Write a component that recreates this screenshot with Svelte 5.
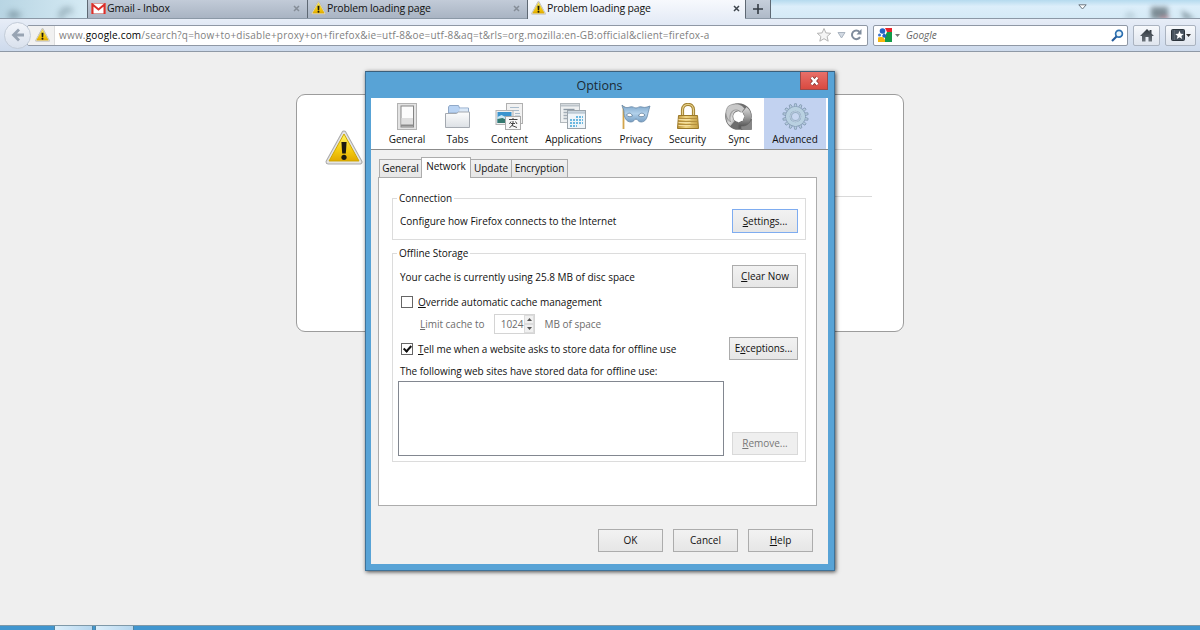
<script lang="ts">
  type Pane = { id: string; label: string };

  const panes: Pane[] = [
    { id: 'general', label: 'General' },
    { id: 'tabs', label: 'Tabs' },
    { id: 'content', label: 'Content' },
    { id: 'applications', label: 'Applications' },
    { id: 'privacy', label: 'Privacy' },
    { id: 'security', label: 'Security' },
    { id: 'sync', label: 'Sync' },
    { id: 'advanced', label: 'Advanced' }
  ];

  const browserTabs = [
    { title: 'Gmail - Inbox', icon: 'gmail' },
    { title: 'Problem loading page', icon: 'warning' },
    { title: 'Problem loading page', icon: 'warning' }
  ];

  const subTabs = ['General', 'Network', 'Update', 'Encryption'];
  const gearTeeth = Array.from({ length: 14 }, (_, i) => (i * 360) / 14);

  let activeBrowserTab = $state(2);
  let activePane = $state('advanced');
  let activeSubTab = $state('Network');
  let overrideCache = $state(false);
  let tellMe = $state(true);
</script>

{#snippet warning(size: number)}
  <svg width={size} height={size * 0.92} viewBox="0 0 38 35">
    <path d="M19 3 L35 32 H3 Z" fill="#a9a9a9" stroke="#a9a9a9" stroke-width="5" stroke-linejoin="round" />
    <path d="M19 3 L35 32 H3 Z" fill="#e9e9e9" stroke="#e4e4e4" stroke-width="3" stroke-linejoin="round" />
    <path d="M19 4 L34 31 H4 Z" fill="url(#warn)" stroke="#cfa800" stroke-width="1" stroke-linejoin="round" />
    <path d="M16.4 12 h5.2 l-.8 11.5 h-3.6z" fill="#1c1a10" />
    <circle cx="19" cy="27.4" r="2.6" fill="#1c1a10" />
  </svg>
{/snippet}

{#snippet paneIcon(id: string)}
  <svg class="pane-icon" width="30" height="28" viewBox="0 0 30 28">
    {#if id === 'general'}
      <rect x="5.500" y=".5" width="19" height="26" fill="#e3e3e3" stroke="#b3b3b3" />
      <rect x="9" y="3" width="12.500" height="21" fill="#fcfcfc" stroke="#858585" />
      <rect x="9.500" y="15" width="11.500" height="7" fill="#dedede" />
      <path d="M9 22.500h12.500" stroke="#8a8a8a" stroke-width="2" />
    {:else if id === 'tabs'}
      <path d="M5.500 10V4l1-1.500h9l1 2.500h9V10z" fill="#b9d3f3" stroke="#91a9c8" />
      <path d="M17 5.500h8v3.500h-9z" fill="#dbe8f6" />
      <path d="M2.500 10.500h11l2-1.500h11v15.500h-24z" fill="url(#folder)" stroke="#a4a9b0" />
    {:else if id === 'content'}
      <rect x="11.500" y=".5" width="16" height="20" fill="#f1f1f1" stroke="#b0b0b0" />
      <path d="M15 4.500h9M17 7.500h7M20 10.500h5M20 13h5" stroke="#a9bccc" />
      <rect x="1" y="7.500" width="17" height="14" fill="#f0f0f0" stroke="#b4b4b4" />
      <rect x="2.500" y="9" width="14" height="11" fill="#3a94ce" />
      <path d="M2.500 14l4-2 4 2 6-1v3h-14z" fill="#cce9f6" />
      <path d="M2.500 16l5-1 4 2h5v3h-14z" fill="#34796f" />
      <rect x="10.500" y="13.500" width="15" height="13" fill="#f7f7f7" stroke="#aaa" />
      <path d="M14 16.500h8.500M18 15v2M16 18.500l-1.500 2.500M20.500 18.500l1.500 2.500M18 18c.5 3-1 5.500-3.500 6.500M18.500 20l-1.500 2.500 5 2M16 20.500h4" fill="none" stroke="#444" stroke-width="1" />
    {:else if id === 'applications'}
      <rect x="1.500" y=".5" width="19" height="19" fill="#eef0f1" stroke="#b3b9bd" />
      <path d="M2 2.500h18" stroke="#bcc4ca" stroke-width="2" />
      <path d="M4.500 6.500h11" stroke="#8b97a3" stroke-width="1.400" />
      <path d="M4.500 9.500h4M4.500 12.500h4M4.500 15.500h4" stroke="#a3adb6" stroke-width="1.400" />
      <rect x="8.500" y="7.500" width="18" height="18" fill="#eff5f9" stroke="#9ba4ab" />
      <path d="M9 9.500h17" stroke="#bccad5" stroke-width="2.500" />
      <path d="M17 14h7M11 17h13M11 20h13M11 23h7" stroke="#6bb8e0" stroke-width="2" stroke-dasharray="2 1" />
    {:else if id === 'privacy'}
      <path d="M2.500 3v23" stroke="#d3a54c" stroke-width="1.800" />
      <path d="M1 2c3 3 5 3 8 2 3-1 4 1 6 1s3-2 6-1 5 0 8-1c-1 3-1 4-2 7-1 6-3 9-7 9-3 0-3.500-3-5-3s-2 3-5 3C5 19 3 14 3 9 3 6 1 4 1 2z" fill="url(#mask)" stroke="#6788a7" stroke-width=".8" />
      <path d="M5.500 12c2-3 5-2 6 1-2 1-5 1-6-1zM17.500 13c1-3 4-4 6.500-1-1 2-4.500 2-6.500 1z" fill="#fff" stroke="#54728f" stroke-width=".7" />
    {:else if id === 'security'}
      <path d="M9.500 13V7c0-7.500 11-7.500 11 0v6" fill="none" stroke="#a18131" stroke-width="3.200" />
      <path d="M9.500 13V7c0-7.500 11-7.500 11 0v6" fill="none" stroke="#e8d28c" stroke-width="1.200" />
      <path d="M5.500 12.500h19l1 13h-21z" fill="url(#lock)" stroke="#9a7829" />
      <path d="M5.500 15.500h19M5.500 18.500h19M5.500 21.500h19" stroke="#b38f3e" />
      <path d="M5.500 16.500h12M5.500 19.500h12M5.500 22.500h12" stroke="#f4dfa0" />
    {:else if id === 'sync'}
      <circle cx="14.500" cy="13.500" r="9.300" fill="none" stroke="#6d6d6d" stroke-width="8" />
      <path d="M14.500 4.200a9.300 9.300 0 0 0-6 16.300" fill="none" stroke="url(#steel)" stroke-width="6.600" />
      <path d="M14.500 22.800a9.300 9.300 0 0 0 6-16.300" fill="none" stroke="url(#steel2)" stroke-width="6.600" />
      <path d="M4.500 3c6-3.500 13-2.500 16 2.500l-3 4.500c-2-3-6-4-9-2-3 3-3 7-2 11C.5 14 1 7 4.500 3z" fill="#c9c9c9" stroke="#808080" stroke-width=".6" />
      <path d="M17 26.500h10.500V16c-2 5-5.500 7.500-10.500 7z" fill="#858585" stroke="#606060" stroke-width=".6" />
      <path d="M14 8.500l2 1.200 2.500-.4.500 2.200 1.500 1.800-1.300 2-.3 2.400-2.400.2-2 1.600-1.700-1.800-2.500-.6.300-2.500-1-2.300 2.100-1.300z" fill="#fff" />
    {:else}
      <g transform="translate(15.500 13.500)">
        {#each gearTeeth as angle}
          <path d="M-1.500-9-.9-12.800h1.800L1.500-9z" transform="rotate({angle})" fill="#b5ccde" stroke="#8299b2" stroke-width=".8" />
        {/each}
        <circle r="7.700" fill="none" stroke="#829ab3" stroke-width="5" />
        <circle r="7.700" fill="none" stroke="#b9d1e1" stroke-width="3.900" />
        <circle r="4.400" fill="#c8d7f0" stroke="#8ea7bf" stroke-width="1.800" />
        <circle r="4.800" fill="none" stroke="#d5e3ee" stroke-width=".7" />
      </g>
    {/if}
  </svg>
{/snippet}

<svg class="defs" width="0" height="0">
  <defs>
    <linearGradient id="warn" x2="0" y2="1"><stop stop-color="#fff36a" /><stop offset=".6" stop-color="#f5cc10" /><stop offset="1" stop-color="#e2a900" /></linearGradient>
    <linearGradient id="folder" x2="0" y2="1"><stop stop-color="#fdfdfd" /><stop offset="1" stop-color="#dce0e5" /></linearGradient>
    <linearGradient id="mask" x2="0" y2="1"><stop stop-color="#7ea7cb" /><stop offset=".5" stop-color="#b1d0ea" /><stop offset="1" stop-color="#779fc4" /></linearGradient>
    <linearGradient id="lock"><stop stop-color="#bd9337" /><stop offset=".4" stop-color="#f0d684" /><stop offset="1" stop-color="#c59f43" /></linearGradient>
    <linearGradient id="steel" x2="1" y2="1"><stop stop-color="#777" /><stop offset=".45" stop-color="#ddd" /><stop offset="1" stop-color="#888" /></linearGradient>
    <linearGradient id="steel2" x2="0" y2="1"><stop stop-color="#ccc" /><stop offset=".5" stop-color="#999" /><stop offset="1" stop-color="#5b5b5b" /></linearGradient>
    <linearGradient id="home" x2="0" y2="1"><stop stop-color="#2f363d" /><stop offset="1" stop-color="#6c747c" /></linearGradient>
  </defs>
</svg>

<div class="browser">
  <div class="tab-strip">
    <div class="glass left">
      <svg width="87" height="19">
        <g fill="none" stroke="#58727e" stroke-width="4">
          <path d="M21 15H10m5-4-5 4 5 4" />
          <path d="M72 12a6 6 0 1 0 0 7" />
        </g>
      </svg>
    </div>
    {#each browserTabs as tab, i}
      <button class="browser-tab" class:active={activeBrowserTab === i} onclick={() => (activeBrowserTab = i)}>
        {#if tab.icon === 'gmail'}
          <svg width="15" height="11" viewBox="0 0 15 11">
            <rect x=".5" y=".5" width="14" height="10" fill="#fff" stroke="#d99b98" />
            <path d="M1.500 11V1.500l6 5 6-5V11" fill="none" stroke="#da2f2b" stroke-width="2" />
          </svg>
        {:else}
          {@render warning(15)}
        {/if}
        <span class="tab-title">{tab.title}</span>
        <svg class="close" width="7" height="7" viewBox="0 0 7 7"><path d="M1 1l5 5M6 1L1 6" stroke="currentColor" stroke-width="1.500" /></svg>
      </button>
    {/each}
    <button class="new-tab" aria-label="New tab">
      <svg width="10" height="10"><path d="M5 0v10M0 5h10" stroke="#333b44" stroke-width="1.600" /></svg>
    </button>
    <div class="glass right">
      <svg class="list-all" width="9" height="6"><path d="M.8.800h7.400L4.500 5z" fill="#fff" stroke="#6b7780" /></svg>
      <svg class="ghosts" width="75" height="19">
        <path d="M0 14l5-3 5 3v5H0z" fill="#b6ccd7" />
        <rect x="26" y="7" width="17" height="12" fill="#5f6d75" />
        <path d="M35 17h9v2h-9z" fill="#c03040" />
        <path d="M56 10l7 4 7 5H59z" fill="#6c7f8a" />
      </svg>
    </div>
  </div>

  <div class="toolbar">
    <button class="back" aria-label="Back">
      <svg width="14" height="14" viewBox="0 0 14 14"><path d="M13 7H3M8 1.500L2.500 7 8 12.500" fill="none" stroke="#98a4b3" stroke-width="2.800" /></svg>
    </button>
    <div class="url-bar">
      <span class="identity">{@render warning(15)}</span>
      <span class="url">www.<b>google.com</b>/search?q=how+to+disable+proxy+on+firefox&amp;ie=utf-8&amp;oe=utf-8&amp;aq=t&amp;rls=org.mozilla:en-GB:official&amp;client=firefox-a</span>
      <svg class="url-icons" width="46" height="16">
        <path d="M7 1.500l1.900 4.400 4.800.4-3.600 3.200 1.100 4.700L7 11.700l-4.200 2.500 1.100-4.700L.3 6.300l4.800-.4z" fill="#f5f5f5" stroke="#b4b4b4" />
        <path d="M21 5.500h7L24.500 11z" fill="#d3dae3" stroke="#aab4c0" />
        <path d="M42.500 5A4.300 4.300 0 1 0 43 10" fill="none" stroke="#7f8c9c" stroke-width="2" />
        <path d="M39.500 7.500h5v-5.500z" fill="#7f8c9c" />
      </svg>
    </div>
    <div class="search-bar">
      <svg width="14" height="14" viewBox="0 0 14 14">
        <rect width="14" height="14" fill="#fff" />
        <path d="M7 0h7v4H9z" fill="#e8232b" />
        <path d="M9 4h5v10H7V8z" fill="#129a48" />
        <path d="M0 14V9.500l4-1 3 3V14z" fill="#f7b60d" />
        <circle cx="4.500" cy="3" r="2.800" fill="#2463c4" />
        <path d="M0 6.500h5V9H0z" fill="#fff" />
        <path d="M6 5l3 3-3 2-2-2z" fill="#2463c4" />
        <circle cx="1.500" cy="7" r="1.500" fill="#3f77cf" />
      </svg>
      <svg class="engine-arrow" width="5" height="3"><path d="M0 0h5L2.500 3z" fill="#777" /></svg>
      <span class="engine">Google</span>
      <svg width="13" height="13"><circle cx="8" cy="4.700" r="3.400" fill="#e9f5fc" stroke="#2b6fb0" stroke-width="1.700" /><path d="M5.500 7.500L1 12" stroke="#245a9a" stroke-width="2.200" /></svg>
    </div>
    <button class="tool home" aria-label="Home">
      <svg width="14" height="13"><path d="M7 0L0 7h2v5.500h3.500V8h3v4.500H12V7h2l-2.500-2.500V1h-2v1.500z" fill="url(#home)" /></svg>
    </button>
    <button class="tool marks" aria-label="Bookmarks">
      <svg width="14" height="12"><rect x=".5" y=".5" width="13" height="11" rx="1" fill="#47525e" stroke="#2b333b" /><path d="M3.500 1v10" stroke="#5c6670" /><path d="M8.500 1.800l1.200 2.900 3 .2-2.300 2 .8 3-2.700-1.600-2.700 1.600.8-3-2.300-2 3-.2z" fill="#fff" /></svg>
      <svg width="5" height="3"><path d="M0 0h5L2.500 3z" fill="#333" /></svg>
    </button>
  </div>

  <main class="page">
    <div class="error-card">
      {@render warning(38)}
      <div class="rules"><hr /><hr /></div>
    </div>

    <div class="dialog">
      <div class="title-bar">
        <span>Options</span>
        <button class="close-btn" aria-label="Close">
          <svg width="11" height="10" viewBox="0 0 11 10"><path d="M2.500 1.500l6 7M8.500 1.500l-6 7" stroke="#7f2c28" stroke-width="4" /><path d="M2.500 1.500l6 7M8.500 1.500l-6 7" stroke="#fff" stroke-width="2.600" /></svg>
        </button>
      </div>

      <div class="client">
        <nav class="panes">
          {#each panes as pane}
            <button class="pane" class:selected={activePane === pane.id} onclick={() => (activePane = pane.id)}>
              {@render paneIcon(pane.id)}
              <span>{pane.label}</span>
            </button>
          {/each}
        </nav>

        <div class="sub-tabs">
          {#each subTabs as name}
            <button class="sub-tab" class:current={activeSubTab === name} onclick={() => (activeSubTab = name)}>{name}</button>
          {/each}
        </div>

        <section class="panel">
          <fieldset class="connection">
            <legend>Connection</legend>
            <div class="row first">
              <span>Configure how Firefox connects to the Internet</span>
              <button class="btn focused"><span><u>S</u>ettings...</span></button>
            </div>
          </fieldset>

          <fieldset class="storage">
            <legend>Offline Storage</legend>
            <div class="row first">
              <span>Your cache is currently using 25.8 MB of disc space</span>
              <button class="btn"><span><u>C</u>lear Now</span></button>
            </div>
            <label class="check">
              <input type="checkbox" bind:checked={overrideCache} />
              <span><u>O</u>verride automatic cache management</span>
            </label>
            <div class="limit">
              <span><u>L</u>imit cache to</span>
              <span class="spinner">
                <span class="value">1024</span>
                <span class="arrows">
                  <i><svg width="5" height="3"><path d="M0 3h5L2.500 0z" fill="#555" /></svg></i>
                  <i><svg width="5" height="3"><path d="M0 0h5L2.500 3z" fill="#555" /></svg></i>
                </span>
              </span>
              <span>MB of space</span>
            </div>
            <div class="row tell">
              <label class="check">
                <input type="checkbox" bind:checked={tellMe} />
                <span><u>T</u>ell me when a website asks to store data for offline use</span>
              </label>
              <button class="btn exceptions"><span>E<u>x</u>ceptions...</span></button>
            </div>
            <p>The following web sites have stored data for offline use:</p>
            <div class="sites">
              <div class="listbox"></div>
              <button class="btn" disabled><span><u>R</u>emove...</span></button>
            </div>
          </fieldset>
        </section>

        <footer class="actions">
          <button class="btn">OK</button>
          <button class="btn">Cancel</button>
          <button class="btn"><span><u>H</u>elp</span></button>
        </footer>
      </div>
    </div>
  </main>

  <div class="taskbar">
    <span class="task"></span>
    <span class="task"></span>
  </div>
</div>

<style>
  :global(body) {
    margin: 0;
    overflow: hidden;
  }

  .defs {
    position: absolute;
  }

  .browser {
    width: 1200px;
    height: 630px;
    display: flex;
    flex-direction: column;
    font-family: 'Open Sans', 'Noto Sans', sans-serif;
    font-size: 10px;
    letter-spacing: -0.02px;
    color: #111;
    background: #efefef;
  }

  svg {
    display: block;
    flex: none;
  }

  button {
    font: inherit;
    letter-spacing: inherit;
    color: inherit;
    padding: 0;
    margin: 0;
    border: 0;
    background: none;
    box-sizing: border-box;
  }

  span {
    white-space: nowrap;
  }

  u {
    text-underline-offset: 1px;
    text-decoration-thickness: 1px;
  }

  /* tab strip */
  .tab-strip {
    height: 19px;
    display: flex;
    border-bottom: 1px solid #8b98a6;
    box-sizing: border-box;
    background: linear-gradient(#b5daee, #dceefa 35%, #d5eaf6);
  }

  .glass.left {
    width: 87px;
    overflow: hidden;
    background: linear-gradient(90deg, #b8d5e3, #d5eaf4);
  }

  .glass.left svg {
    filter: blur(3px);
    opacity: 0.6;
  }

  .glass.right {
    flex: 1;
    display: flex;
    align-items: flex-start;
    justify-content: flex-end;
    overflow: hidden;
  }

  .list-all {
    margin: 4px 38px 0 0;
  }

  .ghosts {
    filter: blur(2.5px);
    opacity: 0.75;
  }

  .browser-tab {
    width: 220px;
    height: 18px;
    display: flex;
    align-items: center;
    padding: 0 7px 2px 3px;
    border-left: 1px solid #5e6873;
    background: linear-gradient(#c2cbd8, #a9b4c3);
    font-size: 10.5px;
    color: #111;
  }

  .browser-tab.active {
    height: 19px;
    width: 218px;
    padding-right: 5px;
    padding-bottom: 3px;
    background: linear-gradient(#f7f9fd, #e7edf7);
  }

  .tab-title {
    flex: 1;
    margin-left: 1px;
    text-align: left;
    letter-spacing: -0.16px;
  }

  .close {
    color: #858d97;
  }

  .active .close {
    color: #3e454d;
  }

  .new-tab {
    width: 26px;
    display: flex;
    align-items: center;
    justify-content: center;
    border: 1px solid #5e6873;
    border-width: 0 1px;
    background: linear-gradient(#c6cfdb, #afbac8);
  }

  /* navigation toolbar */
  .toolbar {
    height: 33px;
    display: flex;
    align-items: center;
    box-sizing: border-box;
    padding: 0 4px 0;
    background: linear-gradient(#e7edf7, #cddaec);
    border-bottom: 1px solid #8f99a6;
  }

  .back {
    width: 27px;
    height: 27px;
    display: flex;
    align-items: center;
    justify-content: center;
    border: 1px solid #c3ccd8;
    border-radius: 50%;
    background: linear-gradient(#f2f5fa, #d9e1ed);
    z-index: 1;
  }

  .url-bar,
  .search-bar,
  .tool {
    height: 21px;
    box-sizing: border-box;
    display: flex;
    align-items: center;
    border: 1px solid #8f98a5;
    border-radius: 2px;
    background: #fff;
  }

  .url-bar {
    width: 841px;
    margin-left: -4px;
    padding-right: 4px;
  }

  .identity {
    width: 27px;
    height: 19px;
    padding-left: 7px;
    box-sizing: border-box;
    display: flex;
    align-items: center;
    background: #f1f1f1;
    border-right: 1px solid #ddd;
  }

  .url {
    flex: 1;
    margin-left: 4px;
    color: #7f7f7f;
    letter-spacing: 0.195px;
  }

  .url b {
    font-weight: 400;
    color: #000;
  }

  .search-bar {
    width: 255px;
    margin-left: 5px;
    padding: 0 3px 0 4px;
  }

  .engine-arrow {
    margin-left: 3px;
  }

  .engine {
    flex: 1;
    margin-left: 6px;
    font-style: italic;
    color: #666;
  }

  .tool {
    width: 27px;
    margin-left: 5px;
    justify-content: center;
    border-color: #aab3c0;
    background: linear-gradient(#f7f9fc, #dfe5ee);
  }

  .tool.marks {
    width: 31px;
    gap: 1px;
  }

  /* page behind the dialog */
  .page {
    flex: 1;
    position: relative;
    background: #efefef;
  }

  .error-card {
    width: 608px;
    height: 238px;
    box-sizing: border-box;
    display: flex;
    margin: 42px auto 0;
    padding: 35px 31px 0 28px;
    border: 1px solid #9c9c9c;
    border-radius: 9px;
    background: #fff;
  }

  .rules {
    flex: 1;
    margin-left: 20px;
    padding-top: 19px;
  }

  hr {
    margin: 0 0 46px;
    border: 0;
    border-top: 1px solid #d9d9d9;
  }

  /* options dialog */
  .dialog {
    position: absolute;
    left: 365px;
    top: 19px;
    width: 470px;
    height: 500px;
    box-sizing: border-box;
    padding: 0 6px 6px 5px;
    border: 1px solid #3f7298;
    border-top-color: #3c5f7a;
    background: #58a3d6;
    box-shadow: 1px 1px 4px rgba(0, 0, 0, 0.7);
  }

  .title-bar {
    height: 26px;
    position: relative;
    display: flex;
    align-items: center;
    justify-content: center;
    font-size: 12.5px;
    color: #1b2a35;
  }

  .close-btn {
    position: absolute;
    top: 0;
    right: 0;
    width: 28px;
    height: 18px;
    display: flex;
    align-items: center;
    justify-content: center;
    border: 1px solid #9b4a4a;
    border-top: 0;
    background: linear-gradient(#e8706a, #d94a40);
  }

  .client {
    height: 466px;
    background: #f0f0f0;
  }

  .panes {
    height: 52px;
    box-sizing: border-box;
    display: grid;
    grid-template-columns: 50px 51px 53px 75px 50px 53px 50px 62px;
    padding-left: 11px;
    background: #fff;
    border-bottom: 1px solid #8b8b8b;
  }

  .pane {
    display: flex;
    flex-direction: column;
    align-items: center;
    padding-top: 5px;
  }

  .pane span {
    margin-top: 1px;
    line-height: 14px;
  }

  .pane.selected {
    background: #c2d2f0;
  }

  .sub-tabs {
    display: flex;
    align-items: flex-end;
    height: 20px;
    margin: 7px 0 0 8px;
  }

  .sub-tab {
    height: 18px;
    width: 43px;
    padding-bottom: 1px;
    border: 1px solid #acacac;
    border-bottom: 0;
    background: linear-gradient(#f1f1f1, #e6e6e6);
  }

  .sub-tab.current {
    width: 50px;
    height: 21px;
    margin: 0 -1px -1px;
    padding-bottom: 4px;
    background: #fff;
    z-index: 1;
  }

  .sub-tab:nth-child(3) {
    width: 42px;
  }

  .sub-tab:last-child {
    width: 57px;
    margin-left: -1px;
  }

  .panel {
    width: 439px;
    height: 329px;
    box-sizing: border-box;
    margin-left: 7px;
    padding: 12px 10px 0 13px;
    border: 1px solid #acacac;
    background: #fff;
  }

  fieldset {
    box-sizing: border-box;
    min-width: 0;
    margin: 0;
    padding: 0 7px;
    border: 1px solid #dcdcdc;
  }

  legend {
    margin-left: -3px;
    padding: 0 2px;
    line-height: 16px;
  }

  .connection {
    height: 50px;
  }

  .storage {
    height: 217px;
    margin-top: 5px;
  }

  .row {
    display: flex;
    align-items: center;
    justify-content: space-between;
    height: 24px;
  }

  .row.first {
    margin-top: 3px;
  }

  .storage .row.first {
    margin-top: 4px;
  }

  .btn {
    width: 66px;
    height: 23px;
    padding-bottom: 1px;
    border: 1px solid #acacac;
    background: linear-gradient(#f2f2f2, #e6e6e6);
  }

  .row.first .btn {
    margin-bottom: 1px;
  }

  .connection .row .btn {
    height: 24px;
    margin: 0;
  }

  .btn.focused {
    border-color: #7eacf0;
  }

  .btn:disabled {
    color: #777;
    border-color: #d9d9d9;
    background: #efefef;
  }

  .exceptions {
    width: 69px;
    margin-bottom: 1px;
  }

  .check {
    height: 25px;
    display: flex;
    align-items: center;
    gap: 5px;
  }

  .check input {
    appearance: none;
    width: 12px;
    height: 12px;
    box-sizing: border-box;
    margin: 0 0 0 1px;
    display: grid;
    place-items: center;
    border: 1px solid #666;
    background: #fff;
  }

  .check input:checked::after {
    content: '';
    width: 3px;
    height: 6px;
    margin-top: -2px;
    border: solid #111;
    border-width: 0 2px 2px 0;
    transform: rotate(42deg);
  }

  .limit {
    height: 20px;
    display: flex;
    align-items: center;
    padding-left: 20px;
    color: #6d6d6d;
  }

  .spinner {
    width: 41px;
    height: 20px;
    box-sizing: border-box;
    display: flex;
    margin: 0 9px 0 10px;
    border: 1px solid #d4d4d4;
    background: #fff;
  }

  .value {
    flex: 1;
    text-align: right;
    line-height: 19px;
  }

  .arrows {
    width: 10px;
    display: flex;
    flex-direction: column;
    margin-left: 1px;
  }

  .arrows i {
    flex: 1;
    display: flex;
    align-items: center;
    justify-content: center;
    border: 1px solid #dcdcdc;
    background: #f0f0f0;
  }

  .row.tell {
    margin-top: 3px;
    letter-spacing: -0.05px;
  }

  p {
    margin: 0;
    line-height: 20px;
    letter-spacing: -0.03px;
  }

  .sites {
    display: flex;
    align-items: flex-end;
    justify-content: space-between;
    margin-left: -2px;
  }

  .sites .btn {
    margin-bottom: 1px;
  }

  .listbox {
    width: 326px;
    height: 75px;
    box-sizing: border-box;
    border: 1px solid #828790;
    background: #fff;
  }

  .actions {
    display: flex;
    justify-content: flex-end;
    gap: 10px;
    margin: 23px 15px 0 0;
  }

  .actions .btn {
    width: 65px;
  }

  /* windows taskbar, top edge only */
  .taskbar {
    height: 4px;
    display: flex;
    gap: 2px;
    padding-left: 54px;
    border-top: 1px solid #7f99a8;
    background: #4196cf;
  }

  .task {
    width: 37px;
    background: linear-gradient(90deg, #dceefa, #b5d6ee);
    border: 1px solid #52849f;
    border-width: 0 1px;
  }
</style>
